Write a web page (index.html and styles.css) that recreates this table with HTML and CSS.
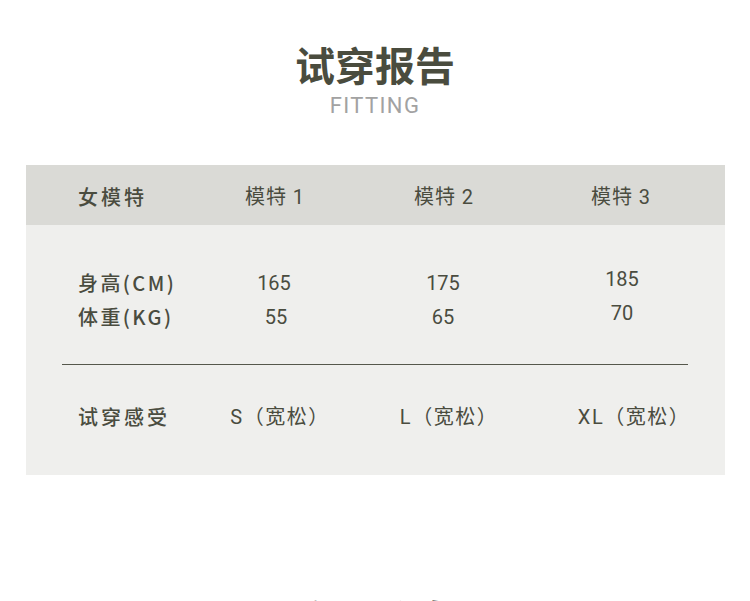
FILE: index.html
```html
<!DOCTYPE html>
<html lang="zh">
<head>
<meta charset="utf-8">
<link rel="stylesheet" href="styles.css">
</head>
<body>
<section class="report">
  <h1 class="title">试穿报告</h1>
  <p class="subtitle">FITTING</p>

  <div class="card">
    <div class="row row-head">
      <div class="label label-head">女模特</div>
      <div class="cell cell-head">模特 1</div>
      <div class="cell cell-head">模特 2</div>
      <div class="cell cell-head">模特 3</div>
    </div>

    <div class="card-body">
      <div class="row row-measure">
        <div class="label label-stack">
          <span>身高(CM)</span>
          <span>体重(KG)</span>
        </div>
        <div class="cell cell-stack">
          <span>165</span>
          <span class="nudge">55</span>
        </div>
        <div class="cell cell-stack">
          <span>175</span>
          <span>65</span>
        </div>
        <div class="cell cell-stack cell-raised">
          <span>185</span>
          <span>70</span>
        </div>
      </div>

      <hr class="divider">

      <div class="row row-feel">
        <div class="label">试穿感受</div>
        <div class="cell cell-feel">S（宽松）</div>
        <div class="cell cell-feel">L（宽松）</div>
        <div class="cell cell-feel cell-wide">XL（宽松）</div>
      </div>
    </div>
  </div>
</section>

<section class="next">
  <h1 class="title">产品信息</h1>
</section>
</body>
</html>
```

FILE: styles.css
```css
html, body {
  margin: 0;
  padding: 0;
  background: #ffffff;
}

body {
  width: 750px;
  font-family: Roboto, "Noto Sans CJK SC", sans-serif;
  color: #4a4c3f;
}

.report {
  padding-top: 40px;
}

.title {
  margin: 0;
  font-family: "Noto Sans CJK SC", sans-serif;
  font-size: 40px;
  font-weight: 700;
  line-height: 48px;
  text-align: center;
  color: #4a4c3e;
  letter-spacing: 0;
}

.subtitle {
  margin: 5px 0 0;
  font-family: Roboto, sans-serif;
  font-size: 22px;
  line-height: 26px;
  letter-spacing: 1.4px;
  text-align: center;
  color: #a2a2a2;
}

.card {
  margin: 46px 0 0 26px;
  width: 699px;
  background: #efefed;
}

.row {
  display: grid;
  grid-template-columns: 112px 168px 170px 184px;
  padding-left: 52px;
  align-items: center;
}

.row-head {
  height: 60px;
  padding-top: 4px;
  box-sizing: border-box;
  background: #dadad6;
  font-size: 20px;
  line-height: 28px;
}

.label {
  font-family: "Noto Sans CJK SC", sans-serif;
  font-size: 20px;
  font-weight: 500;
  letter-spacing: 3px;
  white-space: nowrap;
}

.label-head {
  font-weight: 500;
}

.cell {
  text-align: center;
  font-size: 20px;
  white-space: nowrap;
}

.cell-head {
  letter-spacing: 1px;
  padding-left: 2px;
}

.card-body {
  padding: 41px 0 41px;
}

.row-measure {
  font-size: 20px;
  line-height: 34px;
}

.label-stack,
.cell-stack {
  display: flex;
  flex-direction: column;
}

.label-stack {
  letter-spacing: 2.4px;
  font-family: "Noto Sans CJK SC", sans-serif;
}

.cell-raised {
  margin-top: -8px;
  padding-left: 4px;
}

.nudge {
  padding-left: 4px;
}

.divider {
  margin: 30px 0 0 36px;
  width: 626px;
  height: 0;
  border: 0;
  border-top: 1px solid #55574c;
}

.row-feel {
  margin-top: 35px;
  line-height: 34px;
}

.cell-feel {
  letter-spacing: 1.5px;
  padding-left: 12px;
}

.cell-wide {
  padding-left: 28px;
}

.next {
  padding-top: 119px;
}
```
